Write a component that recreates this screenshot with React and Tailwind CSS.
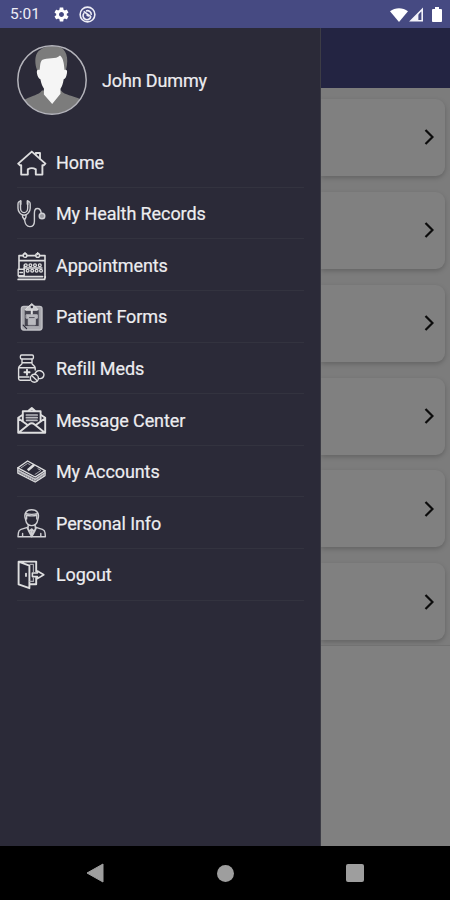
import { IoMdSettings } from "react-icons/io";

const Icon = ({ children }) => (
    <svg
        viewBox="0 0 30 30"
        className="w-[30px] h-[30px] shrink-0"
        fill="none"
        stroke="#dededf"
        strokeWidth="1.4"
        strokeLinejoin="round"
        strokeLinecap="round"
    >
        {children}
    </svg>
);

const HomeIcon = () => (
    <Icon>
        <g strokeWidth="1.9">
            <path d="M14.8 3.6 1.2 15.6l1.8 1.6h1.2v9.400h6.600v-5.200q4-2.600 8 0v5.200h6.600v-9.400h1.300l1.700-1.600z" />
            <path d="M18.8 6.500V5h4.200v5.600" />
        </g>
    </Icon>
);

const RecordsIcon = () => (
    <Icon>
        <g stroke="#cfcfd3">
            <path d="M3.500 2.600C1.600 2.400 1 3.300 1 5.200v4c0 3 2.500 7 6 7s6.200-4 6.200-7v-4c0-1.900-.7-2.800-2.600-2.600" />
            <path d="M3.500 5v4c0 2.300 1.400 4.600 3.600 4.600s3.600-2.300 3.600-4.600V5" />
            <path d="M3.600 2v3M10.600 2v3" strokeWidth="2" />
            <path d="M5.600 16v2l2 3c.5 4 2.200 6.600 5.200 6.600 3.400 0 4.600-2.300 4.600-5.400v-8c0-3 .8-4.700 3-4.700s3.400 1.500 3.800 4.500M9 16v2l-1.400 3" />
            <circle cx="25" cy="17" r="2.800" fill="#9a9aa0" />
        </g>
    </Icon>
);

const CalendarIcon = () => (
    <Icon>
        <path d="M2 18V4.600h4.300M10 4.600h8.800M22.600 4.600H28V26M2.200 9.600H28" strokeWidth="1.600" />
        <circle cx="8" cy="4.400" r="1.900" />
        <circle cx="20.700" cy="4.400" r="1.900" />
        <path d="M8 1.600v2M20.700 1.600v2" />
        <path d="M2 25.600h23.500M1.200 28.400h26.300l.7-2.500" strokeWidth="1.800" />
        <rect x="1.200" y="18.300" width="6" height="6.400" />
        <path d="M3 21.500h2.500M7.200 18.300V14" />
        <g strokeWidth="1.300">
            <circle cx="8.800" cy="14.200" r="1.400" />
            <circle cx="13.400" cy="14.200" r="1.400" />
            <circle cx="18" cy="14.200" r="1.400" />
            <circle cx="22.800" cy="14.200" r="1.400" />
            <circle cx="10.600" cy="19.800" r="1.400" />
            <circle cx="15.200" cy="19.800" r="1.400" />
            <circle cx="19.600" cy="19.800" r="1.400" />
            <circle cx="24" cy="19.800" r="1.400" />
            <path d="M7 17h18" />
        </g>
    </Icon>
);

const FormsIcon = () => (
    <Icon>
        <rect x="4.400" y="4.400" width="20.600" height="23.600" rx="2.400" stroke="#c0c0c5" fill="#a9a9af" />
        <rect x="7.400" y="7.600" width="14.800" height="17" fill="#45444f" stroke="#a9a9af" strokeWidth="1" />
        <path d="M9 6.800 14.800 1.600l5.600 5.200v1.400H9z" fill="#c9c9cd" strokeWidth="1" />
        <circle cx="14.800" cy="5" r="1.200" fill="#2b2a38" stroke="none" />
        <path d="M14.800 8.500V12" strokeWidth="2" />
        <path d="M9.500 12.800h10.800v3.400h-2v6.600h-7v-6.600h-1.800z" fill="#b9b9be" stroke="#b9b9be" strokeWidth="1" />
        <path d="M12.400 15.600h4.800" stroke="#55545f" strokeWidth="1" />
        <path d="m6.200 23.200 3.400 3.400" stroke="#2b2a38" strokeWidth="1.200" />
    </Icon>
);

const RefillIcon = () => (
    <Icon>
        <rect x="3.400" y="1" width="13" height="4" rx="1.200" />
        <path d="M5 5.200v4.200c0 1.600-3.400 2-3.400 4.600v10.600c0 1 .7 1.600 1.600 1.600H13M15 5.200v4.200c0 1.600 3.200 2 3.200 4.600v2M5 8.800h10M1.800 13.800h16.400M1.800 23H12" />
        <path d="M10 15.600v5.200M7.400 18.200h5.200" strokeWidth="1.900" />
        <circle cx="17.400" cy="24.200" r="4" />
        <path d="m14.600 21.600 5.600 5.200" />
        <path d="M18 19.600c1-2.200 3.200-3.400 5.400-2.800 2.800.8 4 3 3.400 5-.6 2-2.600 3.200-5.200 2.600" />
    </Icon>
);

const MessageIcon = () => (
    <Icon>
        <path d="M5.400 9 1.200 11.800v15h27v-15L24 9M1.200 12.200l9.800 7M28.200 12.200l-9.800 7M1.800 26.400l10-8c1.800-1.400 4-1.400 5.800 0l10 8" strokeWidth="1.900" />
        <path d="M5.800 15V5.200h17.800V15M11.200 5 14.800 2l3.400 3" strokeWidth="1.900" />
        <path d="M9.400 9h10.800M9.400 11.700h10.800M9.600 14.400h10.400" stroke="#b9b9be" strokeWidth="1.700" />
    </Icon>
);

const AccountsIcon = () => (
    <Icon>
        <path d="M.9 10.800 10.600 4 28 13.600 18.200 20z" />
        <path d="M.9 10.800v5.400L18.200 25l9.800-6.400v-5" />
        <path d="m1 13.400 17.200 9 9.800-6.400" stroke="#c4c4c8" strokeWidth="1.800" strokeDasharray="1.400 .8" />
        <path d="m1.400 15.200 16.800 8.800 9.600-6.400" stroke="#a9a9af" strokeWidth="1" />
        <path d="m17.200 7.800-6.400 5.400" strokeWidth="2.600" strokeLinecap="butt" />
        <path d="m4.200 10.800 6.400-4.400 2.400 1.200M18 17.400l6-4-3-1.600" stroke="#a9a9af" strokeWidth="1" />
    </Icon>
);

const PersonIcon = () => (
    <Icon>
        <g stroke="#cfcfd3">
            <path d="M8.600 10.600C6.600 5 8.800.8 14.600.8S22.800 5 20.800 10.600c-.6 3.600-3 6-6.100 6s-5.500-2.400-6.100-6z" />
            <path d="M9.600 10V6.200c3.400.9 6.800.9 10.200 0V10M9 4.600c3.800 1 7.600 1 11.400 0" />
            <path d="M11.200 15.600v2.600L4 20.400c-1.600.6-2.400 1.600-2.600 3.400l-.4 4h27.400l-.4-4c-.2-1.800-1-2.800-2.600-3.400l-7.200-2.200v-2.600" />
            <path d="m10.400 18.600 1.800 4 2.500-2.400 2.600 2.400 1.800-4M12.200 22.600l2.500 4.800 2.600-4.800M14.700 20.400v6.400" strokeWidth="1.900" />
            <path d="M5.600 24.400v3M23.800 24.400v3" />
        </g>
    </Icon>
);

const LogoutIcon = () => (
    <Icon>
        <path d="M12.600 24.200h6.600v-6.400M19.200 11.400V1.600H1.600v22.800l10.800 3.800V5.600L2.200 1.800" strokeWidth="1.900" />
        <path d="M13 4.400h3.400v7M16.400 18v3.400H13" stroke="#a9a9af" strokeWidth="1.200" />
        <path d="M9 13.600v2.400" strokeWidth="1.800" />
        <path d="M15.400 13h5v-2l6.400 3.800-6.400 3.800v-2h-5z" strokeWidth="1.600" />
    </Icon>
);

const MENU = [
    { label: "Home", icon: HomeIcon },
    { label: "My Health Records", icon: RecordsIcon },
    { label: "Appointments", icon: CalendarIcon },
    { label: "Patient Forms", icon: FormsIcon },
    { label: "Refill Meds", icon: RefillIcon },
    { label: "Message Center", icon: MessageIcon },
    { label: "My Accounts", icon: AccountsIcon },
    { label: "Personal Info", icon: PersonIcon },
    { label: "Logout", icon: LogoutIcon },
];

const StatusBar = () => (
    <div className="h-[28px] shrink-0 flex items-center bg-[#464a82] text-[#eeeef6] pl-[10px] pr-[8px] pt-px">
        <span className="w-[44px] pt-px text-[15.5px] leading-none">5:01</span>
        <IoMdSettings className="w-[17px] h-[17px] -ml-px text-white" />
        <svg viewBox="0 0 18 18" className="w-[17px] h-[17px] ml-[9px]" fill="none" stroke="#eeeef6" strokeWidth="1.7">
            <circle cx="9" cy="9" r="7.800" />
            <path d="M5.400 7.400A4.200 4.200 0 1 0 12.600 11M5 5.600l7.600 5.600M7.400 5.200a4.200 4.200 0 0 1 5.600 4.200M8 9.200l2.400 1.800" />
        </svg>
        <div className="ml-auto flex items-center">
            <svg viewBox="0 0 18 14" className="w-[18px] h-[14px]" fill="#fff">
                <path d="M0 3.200C5.200-.9 12.800-.9 18 3.200L9 14z" />
            </svg>
            <svg viewBox="0 0 15 15" className="w-[15px] h-[15px] ml-px" fill="none" stroke="#f3f3fa" strokeWidth="1.600">
                <path d="M13.200 2.400v11.400H2z" />
                <path d="M9.400 6.200v7.600H2z" fill="#f3f3fa" stroke="none" />
            </svg>
            <svg viewBox="0 0 10 16" className="w-[10px] h-[15px] ml-[8px]" preserveAspectRatio="none" fill="#fff">
                <path d="M3 0h4v2h1.800c.7 0 1.200.5 1.200 1.200v11.600c0 .7-.5 1.200-1.200 1.200H1.200C.5 16 0 15.500 0 14.800V3.200C0 2.500.5 2 1.200 2H3z" />
            </svg>
        </div>
    </div>
);

const Avatar = () => (
    <svg viewBox="0 0 70 70" className="w-[70px] h-[70px] shrink-0">
        <defs>
            <clipPath id="avatar">
                <circle cx="35" cy="35" r="34" />
            </clipPath>
        </defs>
        <g clipPath="url(#avatar)">
            <path d="M8 54.500c8-4.500 13-4 17-9h19c4 5 11 4.500 20 9V70H7z" fill="#7c7c7c" />
            <path d="M20 25c-3-8-2-17 3-20C29 0 40-1 46 4c5 5 5 13 3 21l-2 7H22z" fill="#7c7c7c" />
            <path d="M22.500 25c1-3 0-7 2.500-10 5-3 14 0 18-4.500 3 2 4 7.500 4.500 14.500 1.800-.8 3 .3 2.500 3-.5 3-1.500 6-3.300 6.200-.8 5-1.700 7.300-3.200 9.500v5L35.200 59l-8.300-9.500v-6c-1.500-2.200-2.700-4.800-3.500-9.300-1.900-.4-3-3.200-3.500-6.200-.4-2.600.8-3.800 2.600-3z" fill="#f5f5f5" />
        </g>
        <circle cx="35" cy="35" r="34.200" fill="none" stroke="#b4b4bb" strokeWidth="1.500" />
    </svg>
);

const Drawer = () => (
    <aside className="w-[321px] shrink-0 bg-[#2b2a38] border-r border-[#3c3c45] text-[#ededf0] [-webkit-text-stroke:0.2px_#ededf0]">
        <div className="flex items-start pl-[17px] pt-[16.5px] h-[108.3px] gap-[15px]">
            <Avatar />
            <h1 className="pt-[27px] text-[18px] leading-none tracking-[-0.14px]">John Dummy</h1>
        </div>
        <ul className="pl-[17px] pr-[16px]">
            {MENU.map(({ label, icon: MenuIcon }) => (
                <li key={label} className="h-[51.6px] flex items-center gap-[9px] pt-[2px] border-b border-[#33333f]">
                    <MenuIcon />
                    <span className="text-[18px] leading-none tracking-[-0.09px] whitespace-nowrap">{label}</span>
                </li>
            ))}
        </ul>
    </aside>
);

const Card = () => (
    <div className="h-[77px] shrink-0 flex items-center justify-end pr-[11px] rounded-r-[9px] bg-[#808080] shadow-[0_2px_5px_rgba(0,0,0,0.2)]">
        <svg viewBox="0 0 10 16" className="w-[10px] h-[16px]" fill="none" stroke="#0c0c0c" strokeWidth="2.2">
            <path d="m1.500 1 7 7-7 7" />
        </svg>
    </div>
);

const Page = () => (
    <main className="flex-1 min-w-0 flex flex-col bg-[#808080]">
        <header className="h-[60px] shrink-0 bg-[#232442]" />
        <div className="h-[558px] shrink-0 flex flex-col gap-[15.9px] pt-[10.9px] pr-[5px] bg-[#7c7c7c] border-b border-[#727272] overflow-hidden">
            {[1, 2, 3, 4, 5, 6].map((n) => (
                <Card key={n} />
            ))}
        </div>
    </main>
);

const NavBar = () => (
    <nav className="h-[54px] shrink-0 bg-black grid grid-cols-[64px_1fr_64px] items-center px-[63px]">
        <svg viewBox="0 0 18 20" className="w-[18px] h-[20px] mr-px justify-self-center" fill="#9e9e9e">
            <path d="M17 1v18L1 10z" stroke="#9e9e9e" strokeLinejoin="round" />
        </svg>
        <span className="w-[17px] h-[17px] rounded-full bg-[#9e9e9e] justify-self-center" />
        <span className="w-[18px] h-[18px] rounded-[2px] bg-[#9e9e9e] justify-self-center" />
    </nav>
);

export default function App() {
    return (
        <div className="w-[450px] h-[900px] flex flex-col overflow-hidden font-[Roboto,sans-serif]">
            <StatusBar />
            <div className="flex-1 min-h-0 flex">
                <Drawer />
                <Page />
            </div>
            <NavBar />
        </div>
    );
}
